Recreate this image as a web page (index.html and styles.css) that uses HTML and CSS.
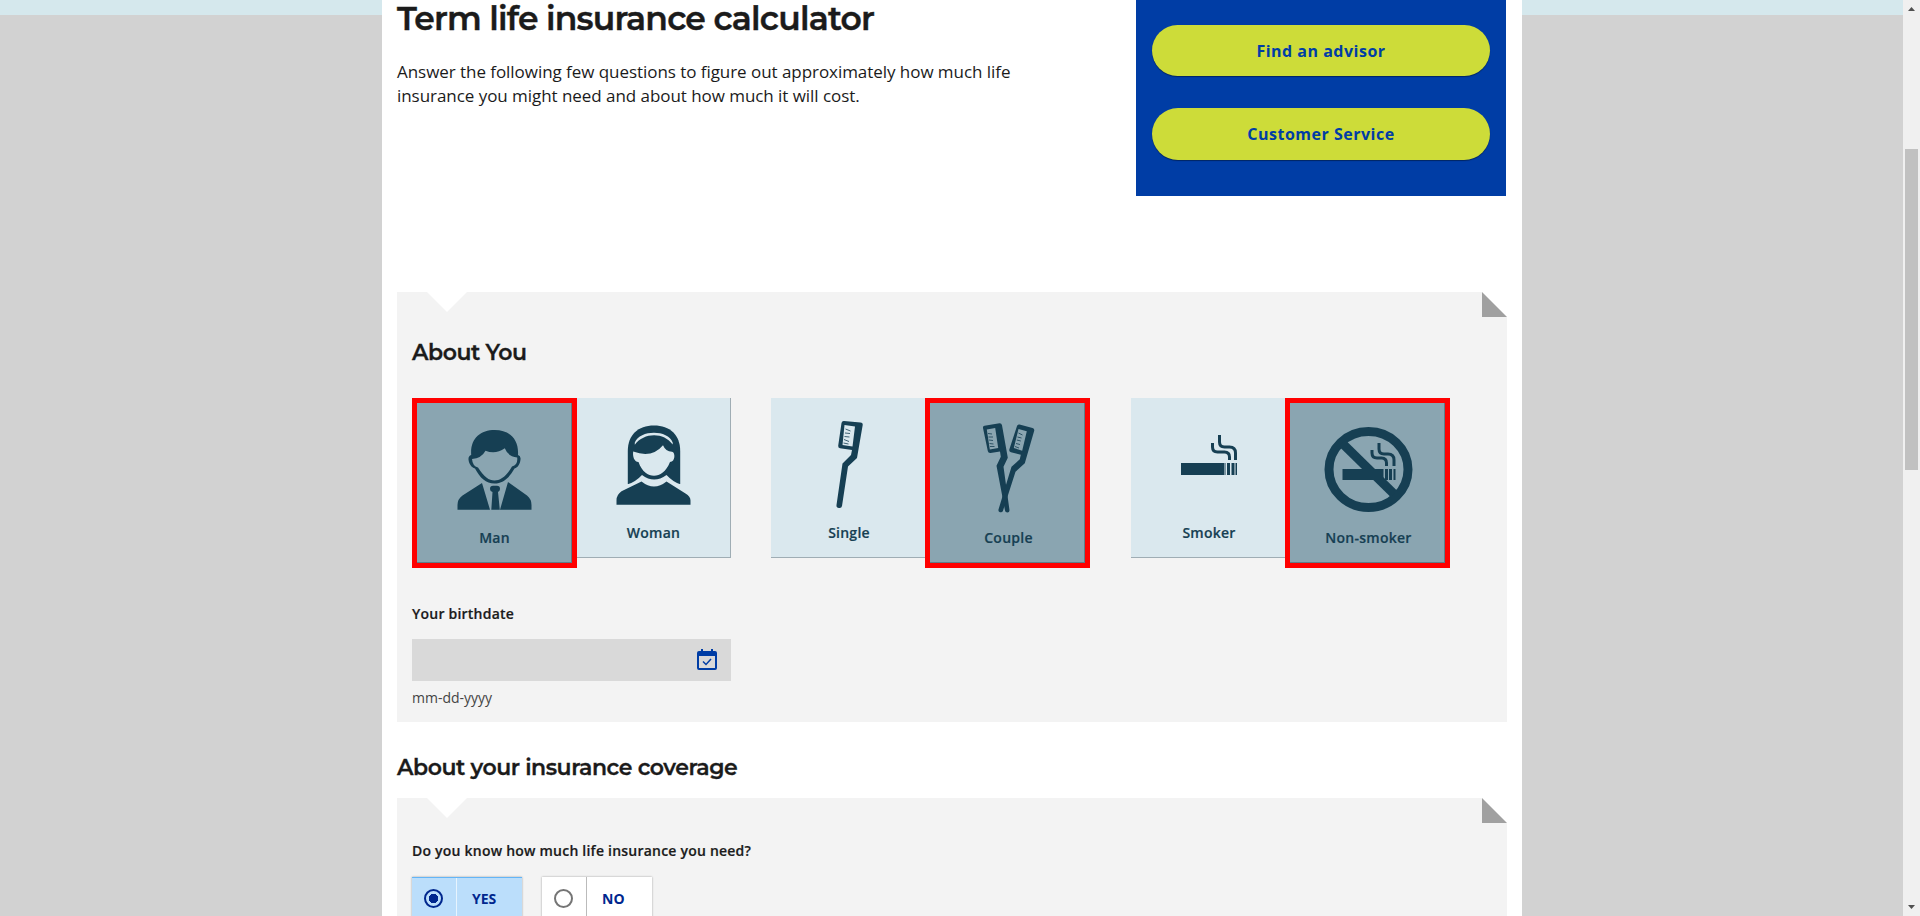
FILE: index.html
```html
<!DOCTYPE html>
<html lang="en">
<head>
<meta charset="utf-8">
<title>Term life insurance calculator</title>
<link rel="stylesheet" href="styles.css">
</head>
<body>
<div class="viewport">
  <div class="page">
    <main class="container">
      <header class="intro">
        <div class="intro-text">
          <h1><span>Term life insurance calculator</span></h1>
          <p class="lead"><span>Answer the following few questions to figure out approximately how much life</span><br><span>insurance you might need and about how much it will cost.</span></p>
        </div>
        <aside class="contact">
          <a class="pill">Find an advisor</a>
          <a class="pill tall">Customer Service</a>
        </aside>
      </header>

      <section class="card card-you">
        <i class="notch"></i><i class="fold"></i>
        <h2 class="about"><span>About You</span></h2>
        <div class="groups">
          <div class="group">
            <div class="tile selected">
              <svg class="art" viewBox="0 0 80 96" fill="#163f53"><path d="M16.200 32C15 16 25 7 39.800 7S64 16 63 32q3 1 2.500 4.500c-.5 4.500-2.500 8-6 9C54 55 48 60.500 39.500 60.500S25 55 20 45.500c-3.500-1-6-4.500-6.500-9q-.3-3.500 2.700-4.500z"/><path fill="#8aa5b1" d="M17 36q9.500-.8 13.500-8.300 10 4 19.300-2.400 3 8 12.400 9.200.8 7.500-5.200 9C51 54 45 57.500 39.500 57.500S29 54 23 44.500Q17.500 43 17 36z"/><path d="M2.500 86.700V82q0-6 5-9.500L27 60l8 26.700zM45 86.700L53 59l19 13.500q4.500 3.500 4.500 9.500v4.700zM38 62.700h4q3 0 3 3.200 0 2-2 3.200l1.800 17.600h-8.500l1.200-17.600q-2.500-1-2.500-3.200 0-3.200 3-3.200z"/></svg>
              <span>Man</span>
            </div>
            <div class="tile edge">
              <svg class="art" viewBox="0 0 80 96" fill="#163f53"><path d="M13.800 66V33C13.800 17 24 7.500 40 7.500S66.200 17 66.200 33v33z"/><path fill="#dae8ee" d="M20.800 24.500C26 11.500 54 11.500 58.700 24.500v2C50 14 30 14 20.800 26.700zM19.200 33.500Q38 40.500 49 27.200q2.500 6 9 6.500c3.500.5 3.500 10-2 10.300C52 54 46 57.700 40 57.700S28 54 24.500 44c-4.500 0-6-6-5.300-10.500z"/><path fill="#dae8ee" d="M13 66.500q8-2 15-9.500 12 9 24.500 0 7 7.500 14.500 9.500l-10 4H23z"/><path d="M2.500 86.700v-4.500q0-5.500 5-9L27.500 63.500q12.500 10 25 0l19 12q5 3 5 7v4.200z"/></svg>
              <span>Woman</span>
            </div>
          </div>
          <div class="group">
            <div class="tile">
              <svg class="art" viewBox="0 0 80 96"><path fill="#163f53" d="M36 3l16.500 1.500q2.500.3 2.200 2.500L49 40l-9 8.500-6 39.500q-.5 2.500-3 2-3-.3-2.500-3L34.500 45.500 43 37l1-5-12-1.700q-2-.5-1.800-2.500L33.500 5q.5-2.200 2.500-2z"/><path fill="#dae8ee" d="M36.500 7l10.500 1.500-2.500 20-10-1.500z"/><path stroke="#163f53" stroke-width=".8" d="M37.500 11l5 2M37 15l5 .5M36.500 18.500l5 .5M36 21.500l5 2M35.500 25l5 1"/></svg>
              <span>Single</span>
            </div>
            <div class="tile selected">
              <svg class="art" viewBox="0 0 80 96" fill="#163f53"><path d="M16.500 2.700L31.500.3q2-.2 2.500 2l5.800 32.400-4.300 9 6 43.500q0 2.300-2 2.300-2.300 0-2.500-2L28.500 42.700l4.300-9-.8-5.200-9.500 1.600q-2.300.2-2.700-2L15 5q-.3-2 1.500-2.300z"/><path d="M51.500 1.500l13 3.500q2.200.8 1.700 2.800l-9.400 32.500-9.300 8.400-12.500 39q-.8 2.200-3 1.500-2-.7-1.500-2.800l13-42.700 8.300-7.400 1-4.500-9.800-2.600q-2.300-.7-1.600-3L49 3q.6-2 2.500-1.500z"/><path fill="#8aa5b1" d="M18.800 6.500l8.400-1.400 3 20-8.400 1.400zM50.500 6l8.300 2.300-4.600 19.400-8.400-2.700z"/><path stroke="#163f53" stroke-width=".8" d="M20 10.500l4 .5M20.500 14h4.500M21 17l4 .5M21.500 20.500l4 .5M22 23.500h4.500M50.500 10l4 2M49.500 14l4 1M48.800 17l4 1M48 20.500l4 1M47 23.500l4 1.500"/></svg>
              <span>Couple</span>
            </div>
          </div>
          <div class="group">
            <div class="tile">
              <svg class="art" viewBox="0 0 80 96" fill="#163f53"><path d="M13 45h43v12H13zM56.500 45h1v12h-1zM59 45h3v12h-3zM63.500 45h3v12h-3zM67.500 45h1.500v12h-1.500z"/><path fill="none" stroke="#163f53" stroke-width="3" d="M44.500 25v4q0 5 5 5h7q5 0 5 5v3M51.500 17v7q0 5 5 5h5q6 0 6 6v7"/></svg>
              <span>Smoker</span>
            </div>
            <div class="tile selected">
              <svg class="art wide" viewBox="0 0 90 96" fill="#163f53"><g fill="none" stroke="#163f53"><ellipse cx="45.500" cy="46.500" rx="39.500" ry="38" stroke-width="9"/><path stroke-width="9" d="M19 20l52 51"/><path stroke-width="3" d="M49 27v3q0 5 5 5h4.500q5 0 5 5v3M56 20v6q0 5 5 5h4q6 0 6 6v6"/></g><path d="M19.500 46h41v11h-41zM62 46h3v11h-3zM66 46h3v11h-3zM70.500 46h2v11h-2z"/></svg>
              <span>Non-smoker</span>
            </div>
          </div>
        </div>
        <label class="label birth"><span>Your birthdate</span></label>
        <div class="date">
          <svg width="20" height="22" viewBox="0 0 20 22"><path fill="#003da5" fill-rule="evenodd" d="M4 0h2v2h8V0h2v2h2q2 0 2 2v15q0 2-2 2H2q-2 0-2-2V4q0-2 2-2h2zM2 7v12h16V7z"/><path fill="none" stroke="#003da5" stroke-width="1.500" d="M6 12.500l3 3 5-5.500"/></svg>
        </div>
        <p class="hint"><span>mm-dd-yyyy</span></p>
      </section>

      <h2 class="coverage"><span>About your insurance coverage</span></h2>
      <section class="card card-coverage">
        <i class="notch"></i><i class="fold"></i>
        <p class="label"><span>Do you know how much life insurance you need?</span></p>
        <div class="choices">
          <div class="choice on"><b class="cell"><i class="radio"></i></b><span>YES</span></div>
          <div class="choice"><b class="cell"><i class="radio"></i></b><span>NO</span></div>
        </div>
      </section>
    </main>
  </div>
  <div class="scrollbar"><i class="arrow up"></i><i class="thumb"></i><i class="arrow down"></i></div>
</div>
</body>
</html>
```
FILE: styles.css
```css
* { box-sizing: border-box; }
body { margin: 0; font-family: "Open Sans", sans-serif; color: #1b1b1b; }
h1, h2, p { margin: 0; }
.viewport { height: 916px; display: flex; overflow: hidden; }
.page { width: 1903px; background: linear-gradient(#d5e8ed 15px, #d2d2d2 15px); }
.container { width: 1140px; height: 916px; margin-left: 382px; padding: 0 15px; background: #fff; overflow: hidden; }
.intro { display: flex; justify-content: space-between; height: 292px; }
h1, h2 { font-family: Montserrat, Inter, sans-serif; font-weight: 600; white-space: nowrap; }
h1 { font-size: 33px; line-height: 37px; letter-spacing: -.78px; -webkit-text-stroke: .4px; }
.lead { margin-top: 23px; font-size: 17px; letter-spacing: -.05px; line-height: 24px; white-space: nowrap; }
.contact { width: 370px; height: 196px; margin-right: 1px; background: #003da5; padding: 25px 16px 0; display: flex; flex-direction: column; gap: 32px; }
.pill { height: 51px; border-radius: 26px; background: #cddc39; color: #003da5; font-size: 16px; font-weight: 700; line-height: 52px; text-align: center; letter-spacing: .5px; box-shadow: 0 1px 1px rgba(0,0,0,.4); }
.pill.tall { height: 52px; line-height: 53px; }
.card { position: relative; background: #f3f3f3; padding: 0 15px; overflow: hidden; }
.card-you { height: 430px; padding-top: 46px; }
.notch { position: absolute; left: 30px; top: 0; width: 40px; height: 20px; background: #fff; clip-path: polygon(0 0, 100% 0, 50% 100%); }
.fold { position: absolute; right: 0; top: 0; width: 25px; height: 25px; background: #fff; }
.fold::after { content: ""; display: block; height: 25px; background: #a0a0a0; clip-path: polygon(0 0, 100% 100%, 0 100%); }
h2 { font-size: 22px; line-height: 30px; letter-spacing: -.44px; -webkit-text-stroke: .3px; }
.groups { display: flex; margin-top: 30px; height: 170px; gap: 40px; }
.group { display: flex; align-items: flex-start; width: 319px; }
.group:nth-child(2) { width: 320px; }
.group + .group span { padding-left: 2px; }
.tile { width: 154px; height: 160px; flex: none; background: #dae8ee; border-bottom: 1px solid #9fadb4; display: flex; flex-direction: column; align-items: center; padding-top: 20px; color: #163f53; font-size: 14px; font-weight: 600; line-height: 20px; letter-spacing: .25px; -webkit-text-stroke: .2px; }
.tile.edge { border-right: 1px solid #9fadb4; }
.tile.selected { width: 165px; height: 170px; background: #8aa5b1; border: 5px solid #f00; box-shadow: inset -1px -1px #607c87; }
.art { width: 80px; height: 96px; margin-bottom: 9px; }
.art.wide { width: 90px; }
.label { display: block; font-size: 14px; font-weight: 600; line-height: 20px; letter-spacing: .22px; -webkit-text-stroke: .2px; }
.birth { margin-top: 36px; }
.date { margin-top: 15px; width: 319px; height: 42px; background: #d9d9d9; display: flex; align-items: center; justify-content: flex-end; padding-right: 14px; }
.hint { margin-top: 7px; font-size: 14px; line-height: 20px; color: #444; }
.coverage { margin-top: 31px; height: 45px; }
.card-coverage { height: 140px; padding-top: 43px; }
.choices { display: flex; gap: 20px; margin-top: 16px; }
.choice { width: 110px; height: 42px; background: #fff; display: flex; align-items: center; color: #00278e; font-size: 14px; font-weight: 700; box-shadow: 0 0 2px rgba(0,0,0,.35); }
.choice.on { background: #bbdefb; border-top: 1px solid #64b5f6; }
.cell { width: 45px; height: 100%; border-right: 1px solid #bbb; margin-right: 15px; padding-right: 2px; display: flex; align-items: center; justify-content: center; }
.on .cell { border-color: #e7f4fe; }
.radio { width: 19px; height: 19px; border: 2px solid #757575; border-radius: 50%; }
.on .radio { border-color: #00278e; background: radial-gradient(circle, #00278e 4.500px, transparent 5px); }
.scrollbar { width: 17px; background: #f0f0f0; display: flex; flex-direction: column; align-items: center; padding: 7px 0; }
.arrow { width: 7px; height: 4px; background: #505050; clip-path: polygon(50% 0, 100% 100%, 0 100%); }
.arrow.down { transform: rotate(180deg); margin-top: auto; }
.thumb { width: 13px; height: 321px; margin-top: 138px; background: #c1c1c1; }
```
